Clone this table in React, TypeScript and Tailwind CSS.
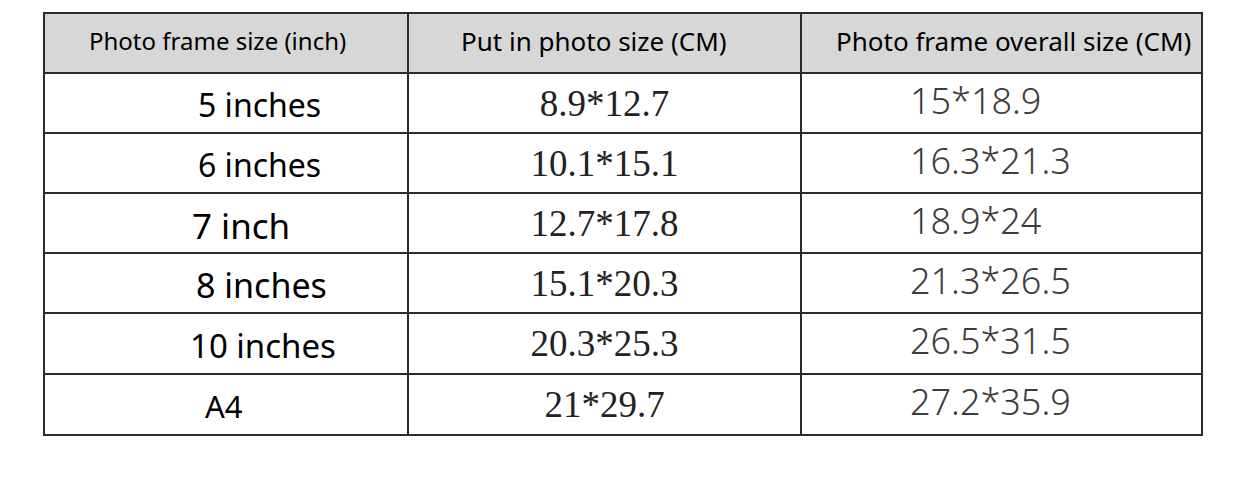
import React from "react";

type Row = {
  size: string;
  sizeClass: string;
  photo: string;
  overall: string;
  rowClass: string;
};

// column 1 text is hand placed in the source image, so each row keeps its own offset
const ROWS: Row[] = [
  { size: "5 inches", sizeClass: "pl-[153px] text-[32px]", photo: "8.9*12.7", overall: "15*18.9", rowClass: "h-[60px]" },
  { size: "6 inches", sizeClass: "pl-[153px] text-[32px]", photo: "10.1*15.1", overall: "16.3*21.3", rowClass: "h-[60px]" },
  { size: "7 inch", sizeClass: "pl-[147px] text-[35px]", photo: "12.7*17.8", overall: "18.9*24", rowClass: "h-[60px]" },
  { size: "8 inches", sizeClass: "pl-[151px] text-[34px]", photo: "15.1*20.3", overall: "21.3*26.5", rowClass: "h-[60px]" },
  { size: "10 inches", sizeClass: "pl-[145px] text-[33px]", photo: "20.3*25.3", overall: "26.5*31.5", rowClass: "h-[61px]" },
  { size: "A4", sizeClass: "pl-[160px] text-[31px] text-[#222]", photo: "21*29.7", overall: "27.2*35.9", rowClass: "h-[61px]" },
];

const cell = "border-2 border-[#2b2b2b] p-0 align-middle";

export default function App() {
  return (
    <div className="h-[484px] w-[1242px] bg-white pt-[12px] pl-[43px]">
      <table className="w-[1158px] table-fixed border-collapse">
        <colgroup>
          <col className="w-[364px]" />
          <col className="w-[393px]" />
          <col className="w-[401px]" />
        </colgroup>
        <thead>
          <tr className="h-[60px] bg-[#d7d7d7] font-['Noto_Sans',sans-serif] text-black">
            <th className={`${cell} pb-[4px] pl-[44px] text-left text-[24px] font-normal`}>
              Photo frame size (inch)
            </th>
            <th className={`${cell} pb-[4px] pl-[52px] text-left text-[26px] font-normal`}>
              Put in photo size (CM)
            </th>
            <th className={`${cell} pb-[4px] pl-[34px] text-left text-[26px] font-normal whitespace-nowrap`}>
              Photo frame overall size (CM)
            </th>
          </tr>
        </thead>
        <tbody>
          {ROWS.map((r) => (
            <tr key={r.size} className={r.rowClass}>
              <td className={`${cell} pt-[4px] text-left font-['Noto_Sans',sans-serif] leading-none text-black ${r.sizeClass}`}>
                {r.size}
              </td>
              <td className={`${cell} text-center font-['Liberation_Serif',serif] text-[37px] leading-none text-[#222]`}>
                {r.photo}
              </td>
              <td className={`${cell} pb-[5px] pl-[108px] text-left font-['Noto_Sans',sans-serif] text-[36px] font-light leading-none text-[#3c3c3c]`}>
                {r.overall}
              </td>
            </tr>
          ))}
        </tbody>
      </table>
    </div>
  );
}
